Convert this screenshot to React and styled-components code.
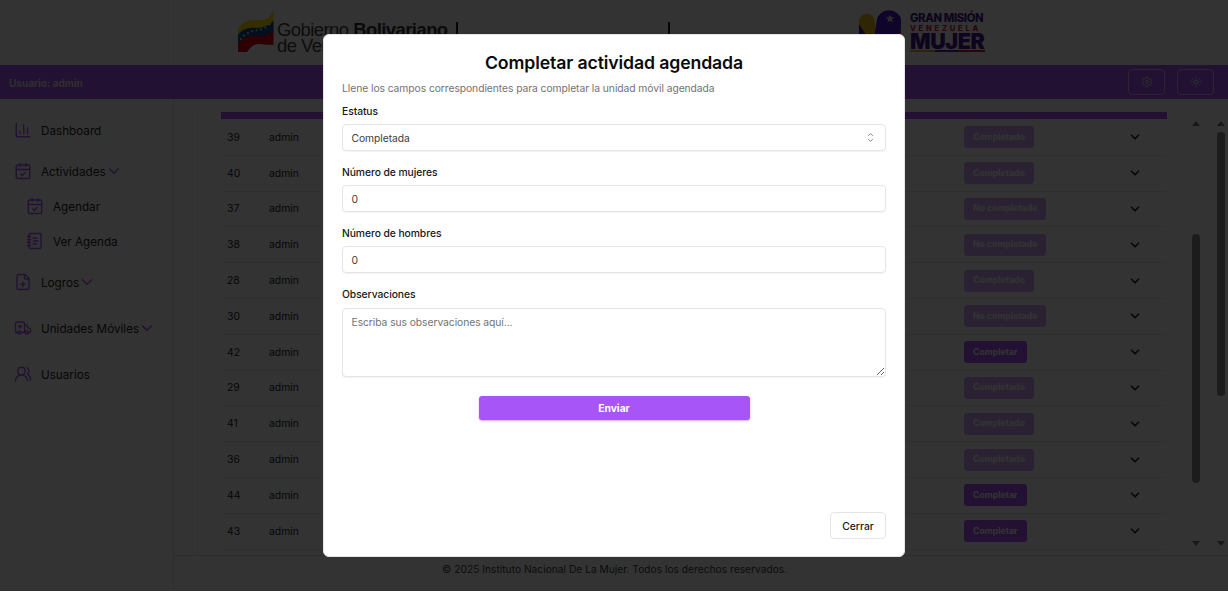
import React from 'react';
import styled, { createGlobalStyle } from 'styled-components';
import { ChartColumn, CalendarCheck, NotebookText, FilePlus, Ambulance, UsersRound, ChevronDown, Settings, Sun } from 'lucide-react';

const Global = createGlobalStyle`
  *{box-sizing:border-box}
  body{margin:0;background:#fff;font-family:Inter,sans-serif;color:#0a0a0a;overflow:hidden}
  button,input,textarea{font-family:inherit}
`;
const Page = styled.div`position:relative;width:1228px;height:591px;overflow:hidden;display:flex;flex-direction:column;background:#fff;`;
const Header = styled.header`height:65px;display:flex;flex:none;`;
const Corner = styled.div`width:174px;flex:none;border-right:1px solid #f0f0f0;`;
const Banner = styled.div`flex:1;padding:10px 0 0 63px;display:flex;align-items:flex-start;`;
const GovText = styled.div`font:18.5px/16px "Liberation Sans",sans-serif;color:#444;margin:12px 0 0 3px;width:179px;white-space:nowrap;letter-spacing:-.57px;b{color:#333}`;
const Divider = styled.i`width:2px;height:28px;background:#222;margin-top:12px;margin-right:${p => p.$gap}px;`;
const Mission = styled.div`display:flex;flex-direction:column;width:75px;margin:1px 0 0 8px;font-weight:800;color:#4a1590;white-space:nowrap;`;
const MissionTop = styled.span`font-size:11.2px;line-height:14px;letter-spacing:-.35px;`;
const MissionMid = styled.span`font-size:7.6px;line-height:8px;letter-spacing:2.75px;color:#d0203c;`;
const MissionBig = styled.span`font-size:21.5px;line-height:17px;letter-spacing:-.4px;font-weight:900;`;
const Stripe = styled.i`height:2px;background:linear-gradient(90deg,#d8b820 33%,#5520c0 33% 66%,#d0203c 66%);`;
const Bar = styled.div`height:34px;flex:none;background:#a855f7;display:flex;align-items:center;padding:0 14px 0 9px;color:#fff;font-size:10px;font-weight:700;gap:12px;`;
const User = styled.span`flex:1;color:#e5e5e5;padding-top:1px;`;
const BarButton = styled.button`width:37px;height:26px;padding:0;border:1px solid #d4b5f5;border-radius:4px;background:none;color:#e5e5e5;display:flex;align-items:center;justify-content:center;`;
const Body = styled.div`flex:1;min-height:0;display:flex;`;
const Side = styled.nav`width:174px;border-right:1px solid #e5e5e5;padding-top:22px;flex:none;`;
const SideItem = styled.div`height:18px;margin:0 0 ${p => p.$after}px ${p => p.$indent}px;display:flex;align-items:center;font-size:11.7px;color:#262626;white-space:nowrap;svg{color:#a855f7;flex:none}span{margin:0 -1px 0 9px;padding-top:1px}`;
const Column = styled.div`flex:1;display:flex;flex-direction:column;min-width:0;`;
const Content = styled.main`height:457px;display:flex;padding-top:13px;border-bottom:1px solid #ddd;overflow:hidden;`;
const Card = styled.section`margin-left:23px;width:992px;border-left:1px solid #eee;padding-left:23px;`;
const TableHead = styled.div`width:946px;height:7px;background:#a855f7;margin-bottom:1px;`;
const Row = styled.div`width:946px;height:35.8px;display:grid;grid-template-columns:42px 695px 164px 1fr;align-items:center;padding-left:6px;border-bottom:1px solid #e8e8e8;font-size:10.4px;color:#262626;`;
const Pill = styled.button`justify-self:start;height:22px;border:0;border-radius:3px;padding:0 9px;background:#a855f7;color:#fff;font-size:8.7px;font-weight:700;line-height:21px;opacity:${p => p.$off ? .5 : 1};`;
const Track = styled.div`width:10px;margin-left:${p => p.$gap}px;display:flex;flex-direction:column;align-items:center;padding:9px 0;`;
const Arrow = styled.i`border:4px solid transparent;${p => p.$down ? 'border-top:5px solid #777;border-bottom:0;margin-top:auto;' : 'border-bottom:5px solid #777;border-top:0;'}`;
const Thumb = styled.i`width:8px;height:${p => p.$h}px;margin-top:${p => p.$top}px;border-radius:4px;background:#8b8b8b;`;
const Footer = styled.footer`height:35px;padding:7px 0 0 268px;font-size:10.2px;line-height:12px;letter-spacing:.02px;color:#404040;`;
const Overlay = styled.div`position:absolute;inset:0;background:rgba(0,0,0,.8);`;
const Dialog = styled.div`position:absolute;left:323px;top:34px;width:582px;height:523px;background:#fff;border:1px solid #e5e5e5;border-radius:6px;padding:18px;display:flex;flex-direction:column;`;
const Title = styled.h2`margin:0;text-align:center;font-size:17.7px;line-height:20px;font-weight:600;letter-spacing:-.13px;`;
const Desc = styled.p`margin:8px 0 8px;font-size:10.3px;line-height:15px;letter-spacing:-.06px;color:#737373;`;
const Label = styled.label`font-size:10.3px;line-height:14px;letter-spacing:-.06px;font-weight:500;margin-bottom:${p => p.$gap || 6}px;color:#171717;`;
const Field = styled.div`height:27px;flex:none;border:1px solid #e5e5e5;border-radius:4px;box-shadow:0 1px 1px rgba(0,0,0,.05);display:flex;align-items:center;justify-content:space-between;padding:0 10px 0 8.5px;font-size:10.3px;letter-spacing:-.06px;color:#404040;margin-bottom:14px;`;
const Area = styled.textarea`height:69px;flex:none;border:1px solid #e5e5e5;border-radius:4px;box-shadow:0 1px 1px rgba(0,0,0,.05);padding:6px 8.5px;font-size:10.3px;line-height:14px;letter-spacing:-.06px;resize:vertical;outline:0;&::placeholder{color:#737373}`;
const Send = styled.button`width:271px;height:24px;margin:19px auto 0;border:0;border-radius:3px;background:#a855f7;color:#fff;font-size:10.3px;font-weight:700;box-shadow:0 1px 2px rgba(168,85,247,.5);`;
const Close = styled.button`width:56px;height:27px;margin:auto 0 -1px auto;border:1px solid #e5e5e5;border-radius:4px;background:#fff;color:#171717;font-size:10.3px;font-weight:500;padding:1px 0 0;`;

const stars = [[4, 29], [7, 25.5], [11, 23], [15, 21.3], [19.5, 20.4], [24, 19.5], [28.5, 17.6], [32.5, 14.5]];
const Flag = () => (
  <svg width="37" height="43" viewBox="0 0 37 43">
    <path d="M1 19Q6 9 20 10Q32 11 36.500 1V15Q30 23 20 19Q9 17 1 29Z" fill="#ffe000" />
    <path d="M1 25Q7 16 20 18Q30 18 36.500 11V23Q30 29 20 26Q9 25 1 36Z" fill="#0b4a91" />
    <path d="M1 34Q8 24 20 26Q30 27 36.500 20V35Q29 35 23 34Q16 33 10 42H1Z" fill="#e00010" />
    {stars.map(([x, y]) => <circle key={x} cx={x} cy={y} r=".9" fill="#fff" />)}
  </svg>
);
const Emblem = () => (
  <svg width="44" height="43" viewBox="0 0 44 43">
    <path d="M1 13L22 43H1Z" fill="#4a1590" />
    <path d="M1 11A8 8 0 0 1 16 8L19 23L13 33L1 14Z" fill="#f0b81c" />
    <path d="M14 43L19 9A12.500 12 0 0 1 43 9V43Z" fill="#4b18d0" />
    <path d="M43 17V43H34Z" fill="#d0203c" />
    <path d="M32 4.500l1.200 2.800 3 .2-2.300 1.900.8 3-2.700-1.700-2.600 1.700.8-3-2.400-1.900 3.100-.2z" fill="#ddd" />
  </svg>
);
const Sorter = () => (
  <svg width="9" height="11" viewBox="0 0 9 11" fill="none" stroke="#888" strokeWidth="1"><path d="M2.200 3.800L4.500 1.700L6.800 3.800M2.200 7.200L4.500 9.300L6.800 7.200" /></svg>
);
const menu = [
  ['Dashboard', ChartColumn, 14, 23, false], ['Actividades', CalendarCheck, 14, 17, true], ['Agendar', CalendarCheck, 26, 17, false],
  ['Ver Agenda', NotebookText, 26, 23, false], ['Logros', FilePlus, 14, 28, true], ['Unidades Móviles', Ambulance, 14, 28, true], ['Usuarios', UsersRound, 14, 0, false],
];
const rows = [[39, 'Completado'], [40, 'Completado'], [37, 'No completada'], [38, 'No completada'], [28, 'Completado'], [30, 'No completada'], [42, 'Completar'], [29, 'Completado'], [41, 'Completado'], [36, 'Completado'], [44, 'Completar'], [43, 'Completar']];

export default function App() {
  return (
    <><Global />
      <Page>
        <Header>
          <Corner />
          <Banner>
            <Flag /><GovText>Gobierno <b>Bolivariano</b><br />de Venezuela</GovText>
            <Divider $gap={210} /><Divider $gap={188} />
            <Emblem />
            <Mission><MissionTop>GRAN MISIÓN</MissionTop><MissionMid>VENEZUELA</MissionMid><MissionBig>MUJER</MissionBig><Stripe /></Mission>
          </Banner>
        </Header>
        <Bar><User>Usuario: admin</User><BarButton><Settings size={12} strokeWidth={2} /></BarButton><BarButton><Sun size={12} strokeWidth={2} /></BarButton></Bar>
        <Body>
          <Side>{menu.map(([name, Icon, indent, after, open]) => (
            <SideItem key={name} $indent={indent} $after={after}><Icon size={18} strokeWidth={1.8} /><span>{name}</span>{open && <ChevronDown size={18} strokeWidth={1.8} />}</SideItem>
          ))}</Side>
          <Column>
            <Content>
              <Card><TableHead />{rows.map(([id, state]) => (
                <Row key={id}><span>{id}</span><span>admin</span><Pill $off={state !== 'Completar'}>{state}</Pill><ChevronDown size={14} strokeWidth={3} /></Row>
              ))}</Card>
              <Track $gap={2}><Arrow /><Thumb $top={108} $h={249} /><Arrow $down /></Track>
              <Track $gap={15}><Arrow /><Thumb $top={6} $h={264} /><Arrow $down /></Track>
            </Content>
            <Footer>© 2025 Instituto Nacional De La Mujer. Todos los derechos reservados.</Footer>
          </Column>
        </Body>
        <Overlay />
        <Dialog role="dialog">
          <Title>Completar actividad agendada</Title>
          <Desc>Llene los campos correspondientes para completar la unidad móvil agendada</Desc>
          <Label>Estatus</Label><Field>Completada<Sorter /></Field>
          <Label>Número de mujeres</Label><Field>0</Field>
          <Label>Número de hombres</Label><Field>0</Field>
          <Label $gap={7}>Observaciones</Label><Area placeholder="Escriba sus observaciones aquí..." />
          <Send>Enviar</Send>
          <Close>Cerrar</Close>
        </Dialog>
      </Page>
    </>
  );
}
